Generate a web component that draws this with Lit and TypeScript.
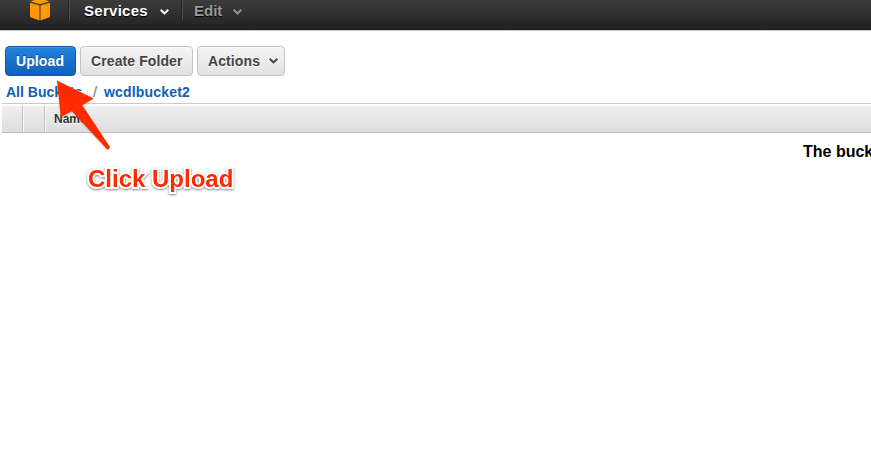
import { LitElement, html, css, svg } from "lit";
import { customElement } from "lit/decorators.js";

const chevron = svg`<path d="M0.7 0.8 L4.5 4.4 L8.3 0.8" fill="none" stroke="currentColor" stroke-width="2"/>`;

@customElement("app-root")
export class AppRoot extends LitElement {
  static styles = css`
    :host {
      display: block;
      position: relative;
      height: 456px;
      overflow: hidden;
      background: #fff;
      font: bold 14px/16px "Liberation Sans", Arial, sans-serif;
      color: #444;
    }
    * { box-sizing: border-box; white-space: nowrap; }
    svg { display: block; flex: none; }
    .nav {
      display: flex;
      height: 31px;
      background: linear-gradient(#3c3c3c, #222 29px);
      border-bottom: 1px solid #c6c4c2;
      color: #fff;
      font-size: 15px;
    }
    .logo { width: 69px; padding-left: 29px; }
    .item {
      display: flex;
      height: 20px;
      padding: 3px 0 0 14px;
      border-left: 1px solid #505050;
      box-shadow: -1px 0 #232323;
      text-shadow: 0 1px 1px #000;
    }
    .services { width: 113px; padding-left: 14px; letter-spacing: 0.28px; }
    .edit { padding-left: 11px; color: #999; }
    .item svg { margin-top: 6px; }
    .services svg { margin-left: 12px; }
    .edit svg { margin-left: 11px; }
    .toolbar { display: flex; gap: 4px; padding: 15px 0 0 5px; }
    .btn {
      display: flex;
      height: 30px;
      padding: 6px 0 0 10px;
      border: 1px solid #c3c3c3;
      border-radius: 4px;
      background: linear-gradient(#f5f5f5, #e1e1e1);
      box-shadow: inset 0 1px #fafafa;
      text-shadow: 0 1px #fff;
    }
    .primary {
      width: 71px;
      color: #fff;
      border-color: #1058a8;
      background: linear-gradient(#2583dc, #0d60bc);
      box-shadow: inset 0 1px #4594df;
      text-shadow: 0 -1px #0d519c;
      letter-spacing: 0.1px;
    }
    .create { width: 113px; letter-spacing: 0.1px; }
    .actions { width: 88px; letter-spacing: 0.1px; }
    .actions svg { margin: 5px 0 0 9px; }
    .crumbs {
      display: flex;
      height: 27px;
      padding: 8px 0 0 6px;
      color: #1160b7;
      letter-spacing: 0.18px;
    }
    .sep { width: 22px; padding-left: 11px; color: #777; font-weight: normal; font-size: 15px; }
    .first { width: 76px; letter-spacing: 0; }
    .table { margin-left: 2px; border-top: 1px solid #c9c9c9; padding-top: 2px; }
    .head {
      display: flex;
      height: 27px;
      border-bottom: 1px solid #bdbdbd;
      background: linear-gradient(#efefef, #dedede);
      font-size: 12px;
      color: #333;
    }
    .cell { width: 21px; border-right: 1px solid #c5c5c5; box-shadow: 1px 0 #f5f5f5; }
    .cell + .cell { width: 22px; }
    .name { padding: 5px 0 0 9px; text-shadow: 0 1px #fff; }
    .empty { padding: 10px 0 0 801px; color: #000; font-size: 16px; line-height: 18px; }
    .arrow { position: absolute; left: 50px; top: 75px; overflow: visible; filter: drop-shadow(0 1px 1px #0003); }
    .note {
      position: absolute;
      left: 88px;
      top: 165px;
      font-size: 24px;
      line-height: 28px;
      color: #ff2a00;
      -webkit-text-stroke: 4px #fff;
      paint-order: stroke fill;
      stroke-linejoin: round;
      filter: drop-shadow(0 1.5px 1px #0007);
    }
  `;

  private caret() {
    return html`<svg width="9" height="7" viewBox="0 0 9 7">${chevron}</svg>`;
  }

  render() {
    return html`
      <nav class="nav">
        <div class="logo">
          <svg width="22" height="21" viewBox="0 0 22 21" fill="#ff9900">
            <path d="M1.6 1.4 L11 -2 L20.4 1.4 L11 4.3Z"/>
            <path d="M1 2.8 L10.5 5.6 V20.4 L1 16.9Z M11.5 5.6 L21 2.8 V16.9 L11.5 20.4Z"/>
          </svg>
        </div>
        <div class="item services">Services ${this.caret()}</div>
        <div class="item edit">Edit ${this.caret()}</div>
      </nav>
      <div class="toolbar">
        <div class="btn primary">Upload</div>
        <div class="btn create">Create Folder</div>
        <div class="btn actions">Actions ${this.caret()}</div>
      </div>
      <div class="crumbs">
        <span class="first">All Buckets</span><span class="sep">/</span><span>wcdlbucket2</span>
      </div>
      <div class="table">
        <div class="head">
          <div class="cell"></div>
          <div class="cell"></div>
          <div class="name">Name</div>
        </div>
        <div class="empty">The bucket</div>
      </div>
      <svg class="arrow" width="62" height="76" viewBox="0 0 62 76">
        <path d="M7 5.5 L43.6 23.4 L32.3 30.3 L59.6 71.6 Q60 74.8 57 74.3 L22 36.2 L10.8 42Z" fill="#ff2a00"/>
      </svg>
      <div class="note">Click Upload</div>
    `;
  }
}
